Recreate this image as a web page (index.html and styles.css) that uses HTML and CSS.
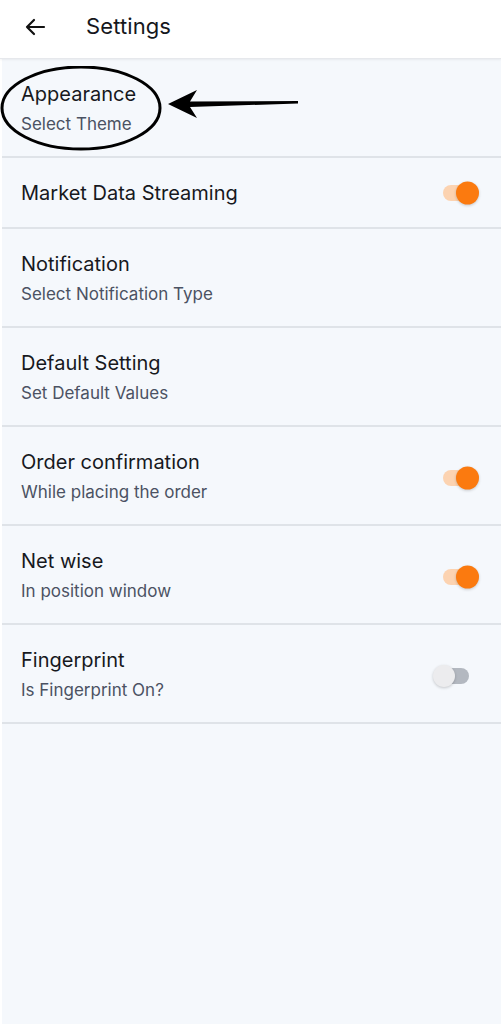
FILE: index.html
```html
<!DOCTYPE html>
<html>
<head>
<meta charset="utf-8">
<link rel="stylesheet" href="styles.css">
</head>
<body>
<div class="screen">
  <header class="topbar">
    <svg class="back" width="22" height="18" viewBox="0 0 22 18"><path d="M20 9H3M10 2L3 9l7 7" fill="none" stroke="#111" stroke-width="2.2" stroke-linecap="round" stroke-linejoin="round"/></svg>
    <h1 class="title">Settings</h1>
  </header>
  <main class="list">
    <div class="row two">
      <div class="text"><div class="name">Appearance</div><div class="sub">Select Theme</div></div>
      <svg class="annot" width="300" height="90" viewBox="0 0 300 90">
        <ellipse cx="81" cy="42" rx="79" ry="41" fill="none" stroke="#000" stroke-width="3"/>
        <path d="M168 38 L197 24 L190 35.5 L298 35 L298 37.5 L190 41 L197 52 Z" fill="#000"/>
      </svg>
    </div>
    <div class="row one">
      <div class="text"><div class="name">Market Data Streaming</div></div>
      <span class="toggle on"></span>
    </div>
    <div class="row two">
      <div class="text"><div class="name">Notification</div><div class="sub">Select Notification Type</div></div>
    </div>
    <div class="row two">
      <div class="text"><div class="name">Default Setting</div><div class="sub">Set Default Values</div></div>
    </div>
    <div class="row two">
      <div class="text"><div class="name">Order confirmation</div><div class="sub">While placing the order</div></div>
      <span class="toggle on"></span>
    </div>
    <div class="row two">
      <div class="text"><div class="name">Net wise</div><div class="sub">In position window</div></div>
      <span class="toggle on"></span>
    </div>
    <div class="row two">
      <div class="text"><div class="name">Fingerprint</div><div class="sub">Is Fingerprint On?</div></div>
      <span class="toggle off"></span>
    </div>
  </main>
</div>
</body>
</html>
```

FILE: styles.css
```css
* { box-sizing: border-box; }
html, body { margin: 0; padding: 0; }
body {
  font-family: Inter, "Noto Sans", sans-serif;
  background: #fff;
  width: 501px;
  height: 1024px;
  overflow: hidden;
}
.screen {
  display: flex;
  flex-direction: column;
  height: 1024px;
}
.topbar {
  height: 59px;
  display: flex;
  align-items: center;
  padding-left: 24px;
  padding-bottom: 6px;
  background: #fff;
  border-bottom: 1px solid #e6e8ec;
  box-shadow: 0 1px 2px rgba(0,0,0,0.06);
  position: relative;
  z-index: 1;
}
.back { margin-right: 40px; margin-top: 1px; }
.title {
  margin: 0;
  font-size: 22px;
  font-weight: 400;
  color: #15171c;
  letter-spacing: 0.1px;
}
.list {
  flex: 1;
  background: #f5f8fc;
  border-left: 2px solid #fff;
}
.row {
  position: relative;
  display: flex;
  align-items: center;
  justify-content: space-between;
  padding: 0 22px 0 19px;
  border-bottom: 2px solid #dfe3e8;
}
.row.two { height: 99px; padding-top: 4px; }
.row.one { height: 71px; }
.name {
  font-size: 20px;
  line-height: 28px;
  color: #17191e;
}
.sub {
  font-size: 17px;
  line-height: 29px;
  margin-top: 2px;
  color: #4b5263;
}
.annot {
  position: absolute;
  left: -2px;
  top: 7px;
}
.toggle {
  position: relative;
  width: 30px;
  height: 16px;
  border-radius: 8px;
}
.toggle::after {
  content: "";
  position: absolute;
  top: 50%;
  width: 23px;
  height: 23px;
  border-radius: 50%;
  transform: translateY(-50%);
  box-shadow: 0 1px 3px rgba(0,0,0,0.2);
}
.toggle.on { background: #fcd3b1; margin-right: 6px; }
.toggle.on::after { right: -6px; background: #fb7a0f; }
.toggle.off { background: #b3b8c0; margin-right: 10px; width: 28px; }
.toggle.off::after { left: -8px; width: 22px; height: 22px; background: #ececee; }
```
